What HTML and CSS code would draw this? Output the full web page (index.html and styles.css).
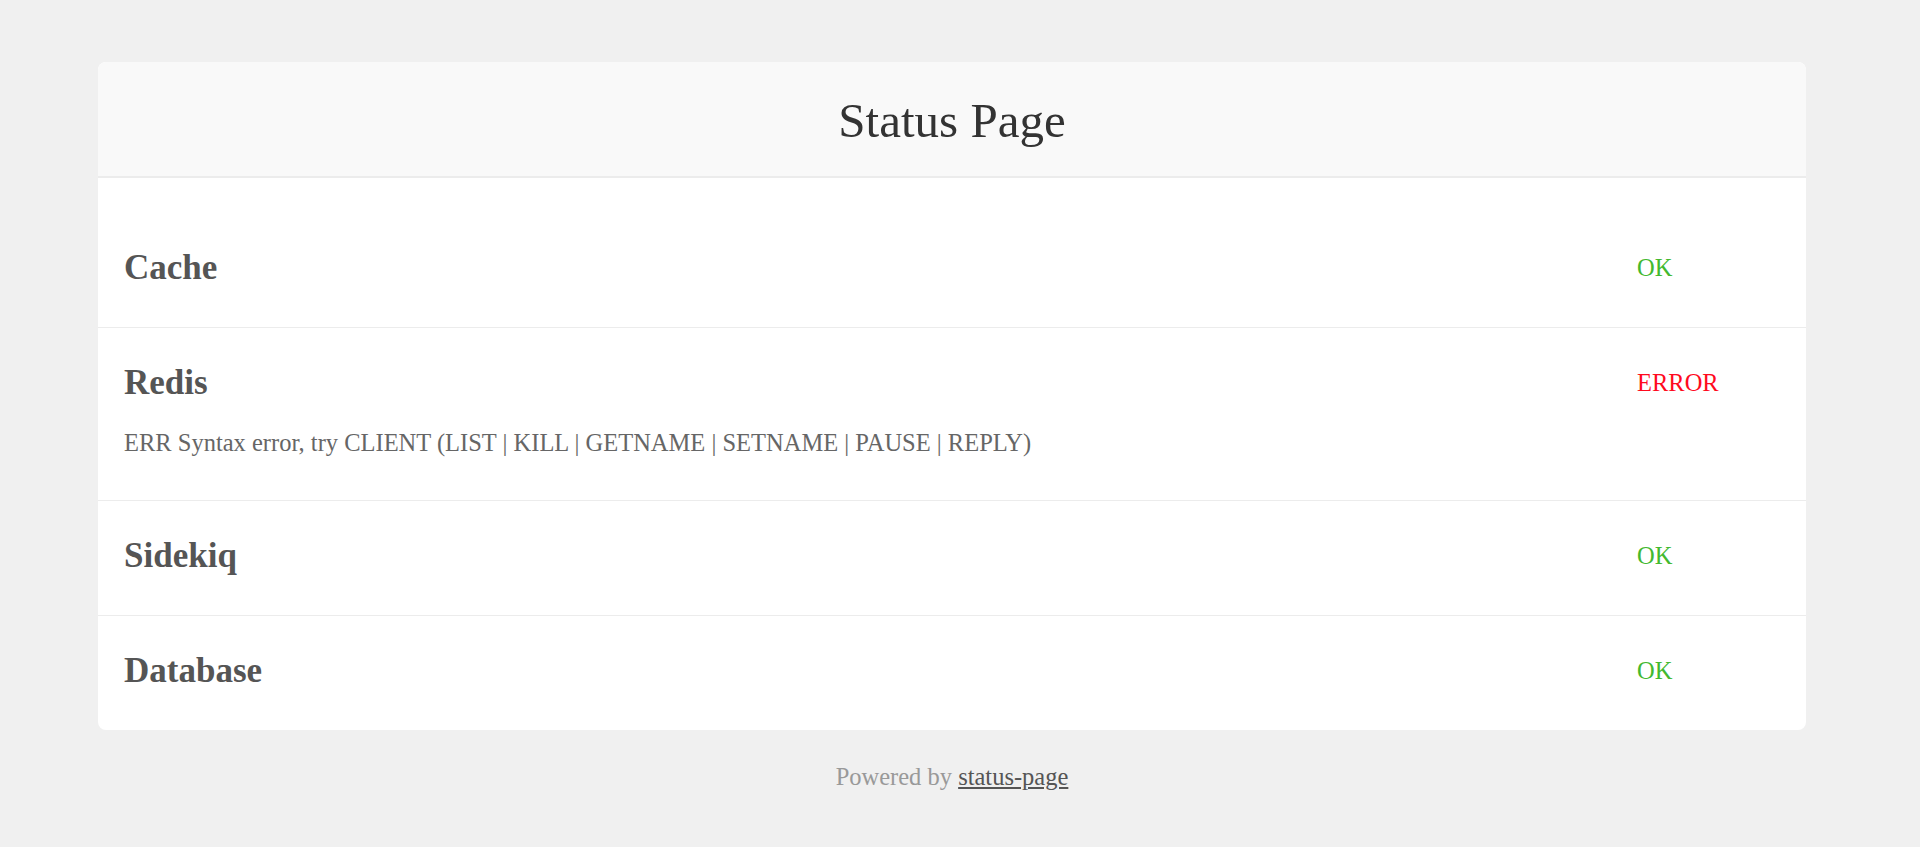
FILE: index.html
```html
<!doctype html>
<html lang="en">
    <head>
        <meta charset="UTF-8" />
        <meta name="viewport" content="width=device-width, initial-scale=1.0" />
        <title>Status Page</title>
        <link rel="stylesheet" href="styles.css">
    </head>
    <body>
        <div class="wrapper">
            <div class="card">
                <div class="card-header">
                    <h1>Status Page</h1>
                </div>
                <div class="checks">
                    <div class="check">
                        <h2 class="check-name">Cache</h2>
                        <div class="check-status ok">OK</div>
                    </div>
                    <div class="check">
                        <h2 class="check-name">Redis</h2>
                        <div class="check-status error">ERROR</div>
                        <p class="check-message">ERR Syntax error, try CLIENT (LIST | KILL | GETNAME | SETNAME | PAUSE | REPLY)</p>
                    </div>
                    <div class="check">
                        <h2 class="check-name">Sidekiq</h2>
                        <div class="check-status ok">OK</div>
                    </div>
                    <div class="check">
                        <h2 class="check-name">Database</h2>
                        <div class="check-status ok">OK</div>
                    </div>
                </div>
            </div>
            <p class="footer">Powered by <a href="#">status-page</a></p>
        </div>
    </body>
</html>
```

FILE: styles.css
```css
html,
body {
    margin: 0;
    background-color: #f0f0f0;
    font-family: "Liberation Serif", "Times New Roman", serif;
    font-size: 24.5px;
    line-height: 27px;
}

.wrapper {
    width: 1708px;
    margin: 62px 0 0 98px;
}

.card {
    background-color: #fff;
    border-radius: 8px;
    overflow: hidden;
}

.card-header {
    background-color: #f9f9f9;
    border-bottom: 2px solid #ececec;
    padding: 32px 0 28px;
    text-align: center;
}

.card-header h1 {
    margin: 0;
    font-size: 49px;
    line-height: 54px;
    font-weight: 400;
    color: #333;
}

.checks {
    padding-top: 35px;
}

.check {
    display: grid;
    grid-template-columns: 1fr 143px;
    align-items: center;
    padding: 35px 26px 40px;
    border-bottom: 1px solid #ececec;
}

.check:last-child {
    border-bottom: none;
}

.check-name {
    margin: 0;
    font-size: 35px;
    line-height: 39px;
    font-weight: 700;
    color: #555;
}

.check-status.ok {
    color: #43b92f;
}

.check-status.error {
    color: #ff0a1e;
}

.check-message {
    grid-column: 1 / -1;
    margin: 27px 0 4px;
    color: #666;
}

.footer {
    margin: 33px 0 0;
    text-align: center;
    color: #999;
}

.footer a {
    color: #555;
}
```
